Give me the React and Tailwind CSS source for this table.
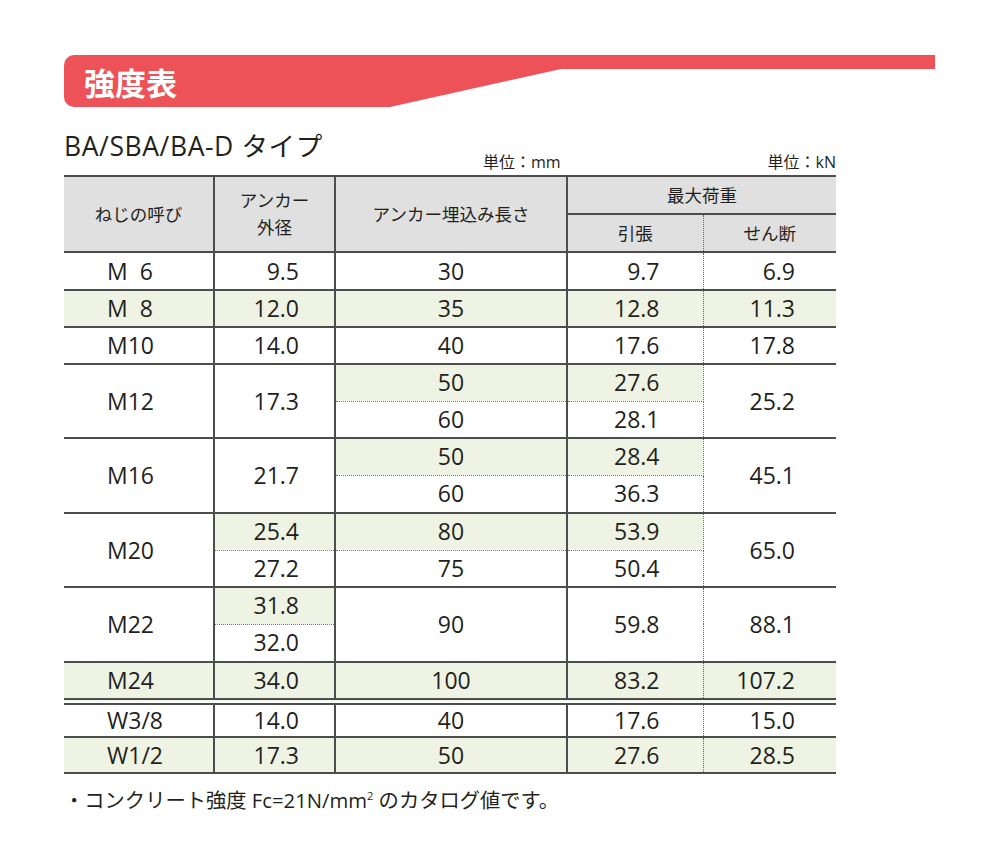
const ink = 'text-[#231f20]';

const colCls = [
  'pl-[43px] text-left border-r-2 border-r-[#4d4d4d]',
  'pr-[35px] text-right border-r-2 border-r-[#4d4d4d]',
  'text-center border-r-2 border-r-[#4d4d4d]',
  'pr-[43px] text-right border-r border-r-[#666] [border-right-style:dotted]',
  'pr-[41px] text-right',
];

function Cell({ col, green, dot, dbl, rows, children }) {
  let bottom = 'border-b-2 border-b-[#4d4d4d]';
  if (dot) bottom = 'border-b border-b-[#777] [border-bottom-style:dotted]';
  if (dbl) bottom = 'border-b-[7px] border-b-[#4d4d4d] [border-bottom-style:double]';
  return (
    <td
      rowSpan={rows}
      className={`${colCls[col]} ${green ? 'bg-[#eef3e3]' : 'bg-white'} ${bottom} p-0 text-[23px] leading-none`}
    >
      {children}
    </td>
  );
}

function Row({ v, green, h = 'h-[37px]', dbl }) {
  return (
    <tr className={h}>
      {v.map((t, i) => (
        <Cell key={i} col={i} green={green} dbl={dbl}>{t}</Cell>
      ))}
    </tr>
  );
}

export default function App() {
  return (
    <div className={`min-h-[858px] bg-white pl-[64px] pt-[55px] font-['Open_Sans','Noto_Sans_CJK_JP',sans-serif] ${ink}`}>
      {/* 見出し帯 */}
      <div className="flex h-[52px] w-[871px] items-center rounded-l-[10px] bg-[#ee5259] pl-[20px] [clip-path:polygon(0_0,100%_0,100%_14px,497px_14px,326px_100%,0_100%)]">
        <span className="font-['Noto_Sans_CJK_JP',sans-serif] text-[31px] font-bold leading-none text-white">強度表</span>
      </div>

      <div className="mt-[24px] flex w-[772px] items-end">
        <div className="w-[419px] text-[26.5px] leading-[30px] tracking-[0.6px]">BA/SBA/BA-D タイプ</div>
        <div className="-mb-[9px] text-[16px] leading-none">単位：mm</div>
        <div className="ml-auto -mb-[9px] text-[16px] leading-none">単位：kN</div>
      </div>

      <table className="mt-[14px] w-[772px] table-fixed border-collapse">
        <colgroup>
          <col className="w-[150px]" />
          <col className="w-[121px]" />
          <col className="w-[232px]" />
          <col className="w-[136px]" />
          <col className="w-[133px]" />
        </colgroup>
        <thead className="bg-[#e0e0e0] text-[17.5px] font-normal">
          <tr className="h-[38px]">
            <th rowSpan={2} className="border-y-2 border-r-2 border-[#4d4d4d] font-normal">ねじの呼び</th>
            <th rowSpan={2} className="border-y-2 border-r-2 border-[#4d4d4d] font-normal leading-[27px]">
              アンカー<br />外径
            </th>
            <th rowSpan={2} className="border-y-2 border-r-2 border-[#4d4d4d] font-normal">アンカー埋込み長さ</th>
            <th colSpan={2} className="border-y-2 border-[#4d4d4d] font-normal">最大荷重</th>
          </tr>
          <tr className="h-[38px]">
            <th className="border-b-2 border-b-[#4d4d4d] border-r border-r-[#666] font-normal [border-right-style:dotted]">引張</th>
            <th className="border-b-2 border-b-[#4d4d4d] font-normal">せん断</th>
          </tr>
        </thead>
        <tbody>
          <Row v={['M\u00a0 6', '9.5', '30', '9.7', '6.9']} h="h-[38px]" />
          <Row v={['M\u00a0 8', '12.0', '35', '12.8', '11.3']} green />
          <Row v={['M10', '14.0', '40', '17.6', '17.8']} />

          <tr className="h-[37px]">
            <Cell col={0} rows={2}>M12</Cell>
            <Cell col={1} rows={2}>17.3</Cell>
            <Cell col={2} green dot>50</Cell>
            <Cell col={3} green dot>27.6</Cell>
            <Cell col={4} rows={2}>25.2</Cell>
          </tr>
          <tr className="h-[37px]">
            <Cell col={2}>60</Cell>
            <Cell col={3}>28.1</Cell>
          </tr>

          <tr className="h-[37px]">
            <Cell col={0} rows={2}>M16</Cell>
            <Cell col={1} rows={2}>21.7</Cell>
            <Cell col={2} green dot>50</Cell>
            <Cell col={3} green dot>28.4</Cell>
            <Cell col={4} rows={2}>45.1</Cell>
          </tr>
          <tr className="h-[38px]">
            <Cell col={2}>60</Cell>
            <Cell col={3}>36.3</Cell>
          </tr>

          <tr className="h-[37px]">
            <Cell col={0} rows={2}>M20</Cell>
            <Cell col={1} green dot>25.4</Cell>
            <Cell col={2} green dot>80</Cell>
            <Cell col={3} green dot>53.9</Cell>
            <Cell col={4} rows={2}>65.0</Cell>
          </tr>
          <tr className="h-[37px]">
            <Cell col={1}>27.2</Cell>
            <Cell col={2}>75</Cell>
            <Cell col={3}>50.4</Cell>
          </tr>

          <tr className="h-[37px]">
            <Cell col={0} rows={2}>M22</Cell>
            <Cell col={1} green dot>31.8</Cell>
            <Cell col={2} rows={2}>90</Cell>
            <Cell col={3} rows={2}>59.8</Cell>
            <Cell col={4} rows={2}>88.1</Cell>
          </tr>
          <tr className="h-[38px]">
            <Cell col={1}>32.0</Cell>
          </tr>

          <Row v={['M24', '34.0', '100', '83.2', '107.2']} green h="h-[39px]" dbl />
          <Row v={['W3/8', '14.0', '40', '17.6', '15.0']} h="h-[36px]" />
          <Row v={['W1/2', '17.3', '50', '27.6', '28.5']} green h="h-[36px]" />
        </tbody>
      </table>

      <p className="mt-[16px] text-[20.3px] leading-none">
        ・コンクリート強度 Fc=21N/mm<span className="relative -top-[8px] text-[11px]">2</span> のカタログ値です。
      </p>
    </div>
  );
}
